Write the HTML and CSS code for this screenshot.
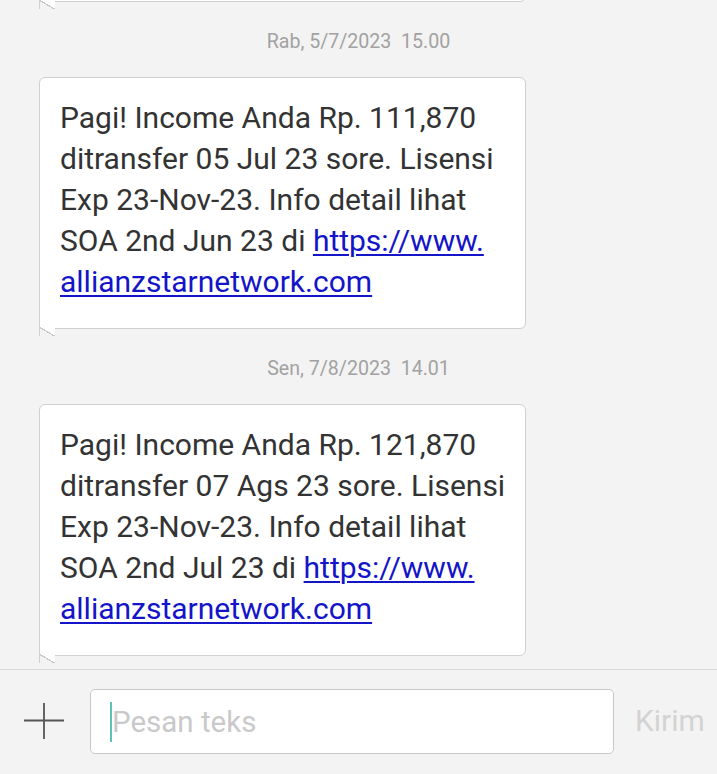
FILE: index.html
```html
<!DOCTYPE html>
<html lang="id">
<head>
<meta charset="utf-8">
<link rel="stylesheet" href="styles.css">
</head>
<body>
<div class="screen">
  <div class="thread">
    <div class="bubble bubble-prev"></div>
    <div class="stamp">Rab, 5/7/2023&nbsp; 15.00</div>
    <div class="bubble">
      <p class="msg">Pagi! Income Anda Rp. 111,870<br>ditransfer 05 Jul 23 sore. Lisensi<br>Exp 23-Nov-23. Info detail lihat<br>SOA 2nd Jun 23 di <a href="#">https://www.<br>allianzstarnetwork.com</a></p>
    </div>
    <div class="stamp">Sen, 7/8/2023&nbsp; 14.01</div>
    <div class="bubble">
      <p class="msg">Pagi! Income Anda Rp. 121,870<br>ditransfer 07 Ags 23 sore. Lisensi<br>Exp 23-Nov-23. Info detail lihat<br>SOA 2nd Jul 23 di <a href="#">https://www.<br>allianzstarnetwork.com</a></p>
    </div>
  </div>
  <div class="composer">
    <button class="add" aria-label="Tambah">
      <svg width="44" height="44" viewBox="0 0 44 44"><path d="M2 21.5H42M22 4V40" stroke="#555" stroke-width="1.8" fill="none"/></svg>
    </button>
    <div class="field"><span class="caret"></span><span class="placeholder">Pesan teks</span></div>
    <span class="send">Kirim</span>
  </div>
</div>
</body>
</html>
```
FILE: styles.css
```css
html, body {
  margin: 0;
  padding: 0;
  background: #f3f3f3;
}
body {
  font-family: Roboto, "Noto Sans", sans-serif;
  width: 717px;
  height: 774px;
  overflow: hidden;
}
.screen {
  display: flex;
  flex-direction: column;
  height: 774px;
}
.thread {
  flex: 1;
  display: flex;
  flex-direction: column;
  align-items: flex-start;
  overflow: hidden;
}
.bubble {
  position: relative;
  margin-left: 39px;
  width: 487px;
  box-sizing: border-box;
  background: #fff;
  border: 1px solid #d0d0d0;
  border-radius: 6px;
  border-bottom-left-radius: 0;
  padding: 19px 20px 26px 20px;
}
.bubble::after {
  content: "";
  position: absolute;
  left: -1px;
  bottom: -8px;
  width: 16px;
  height: 9px;
  background: linear-gradient(to top right, transparent calc(50% - 0.9px), #c8c8c8 calc(50% - 0.9px), #c8c8c8 calc(50% + 0.3px), #fff calc(50% + 0.3px));
  border-left: 1px solid #d0d0d0;
  box-sizing: border-box;
}
.bubble-prev {
  height: 60px;
  margin-top: -58px;
}
.msg {
  margin: 0;
  font-size: 30px;
  line-height: 41px;
  color: #333;
  white-space: nowrap;
}
.msg a {
  color: #1414c8;
  text-decoration: underline;
  text-decoration-thickness: 2px;
  text-underline-offset: 3px;
}
.stamp {
  align-self: stretch;
  text-align: center;
  font-size: 19.6px;
  line-height: 22px;
  color: #a2a2a2;
  margin: 29px 0 24px;
}
.composer {
  height: 105px;
  border-top: 1px solid #d9d9d9;
  display: flex;
  align-items: flex-start;
  padding-top: 19px;
  box-sizing: border-box;
}
.add {
  width: 44px;
  height: 44px;
  margin: 10px 0 0 22px;
  padding: 0;
  border: 0;
  background: none;
  display: flex;
}
.field {
  margin-left: 24px;
  width: 524px;
  height: 65px;
  box-sizing: border-box;
  background: #fff;
  border: 1px solid #c8c8c8;
  border-radius: 5px;
  display: flex;
  align-items: center;
  padding-left: 19px;
}
.caret {
  width: 2px;
  height: 40px;
  background: #5bc4b6;
}
.placeholder {
  font-size: 29.5px;
  color: #c9c9c9;
}
.send {
  margin: 14px 0 0 21px;
  font-size: 30px;
  color: #d3d3d3;
}
```
